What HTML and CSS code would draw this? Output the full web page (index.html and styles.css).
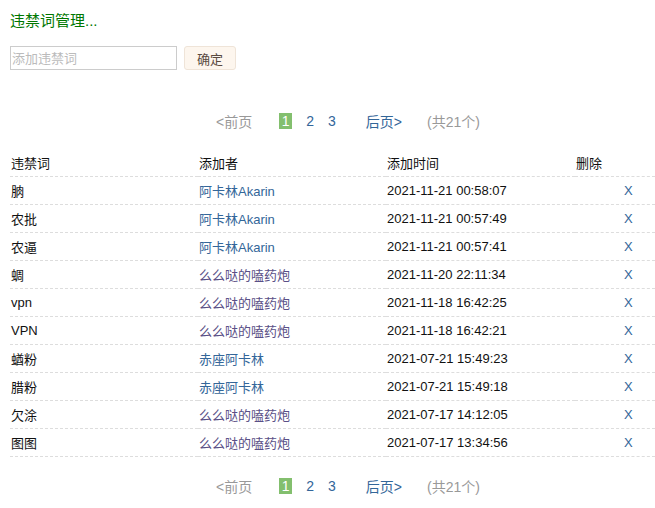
FILE: index.html
```html
<!DOCTYPE html>
<html lang="zh-CN">
<head>
  <meta charset="UTF-8">
  <title>违禁词管理</title>
  <link rel="stylesheet" href="styles.css">
</head>
<body>
  <h2 class="title">违禁词管理...</h2>
  <form class="add-form">
    <input type="text" class="word-input" placeholder="添加违禁词">
    <button type="button" class="btn">确定</button>
  </form>

  <div class="pager">
    <span class="prev">&lt;前页</span>
    <span class="pages"><span class="cur">1</span><a href="#">2</a><a href="#">3</a></span>
    <a href="#" class="next">后页&gt;</a>
    <span class="total">(共21个)</span>
  </div>

  <table class="words">
    <colgroup>
      <col class="c-word"><col class="c-user"><col class="c-time"><col>
    </colgroup>
    <thead>
      <tr><th>违禁词</th><th>添加者</th><th>添加时间</th><th>删除</th></tr>
    </thead>
    <tbody>
      <tr><td>朒</td><td><a href="#">阿卡林Akarin</a></td><td>2021-11-21 00:58:07</td><td class="del"><a href="#">X</a></td></tr>
      <tr><td>农批</td><td><a href="#">阿卡林Akarin</a></td><td>2021-11-21 00:57:49</td><td class="del"><a href="#">X</a></td></tr>
      <tr><td>农逼</td><td><a href="#">阿卡林Akarin</a></td><td>2021-11-21 00:57:41</td><td class="del"><a href="#">X</a></td></tr>
      <tr><td>蜩</td><td><a href="#" class="visited">么么哒的嗑药炮</a></td><td>2021-11-20 22:11:34</td><td class="del"><a href="#">X</a></td></tr>
      <tr><td>vpn</td><td><a href="#" class="visited">么么哒的嗑药炮</a></td><td>2021-11-18 16:42:25</td><td class="del"><a href="#">X</a></td></tr>
      <tr><td>VPN</td><td><a href="#" class="visited">么么哒的嗑药炮</a></td><td>2021-11-18 16:42:21</td><td class="del"><a href="#">X</a></td></tr>
      <tr><td>蝤粉</td><td><a href="#">赤座阿卡林</a></td><td>2021-07-21 15:49:23</td><td class="del"><a href="#">X</a></td></tr>
      <tr><td>腊粉</td><td><a href="#">赤座阿卡林</a></td><td>2021-07-21 15:49:18</td><td class="del"><a href="#">X</a></td></tr>
      <tr><td>欠涂</td><td><a href="#" class="visited">么么哒的嗑药炮</a></td><td>2021-07-17 14:12:05</td><td class="del"><a href="#">X</a></td></tr>
      <tr><td>图图</td><td><a href="#" class="visited">么么哒的嗑药炮</a></td><td>2021-07-17 13:34:56</td><td class="del"><a href="#">X</a></td></tr>
    </tbody>
  </table>

  <div class="pager bottom">
    <span class="prev">&lt;前页</span>
    <span class="pages"><span class="cur">1</span><a href="#">2</a><a href="#">3</a></span>
    <a href="#" class="next">后页&gt;</a>
    <span class="total">(共21个)</span>
  </div>
</body>
</html>
```

FILE: styles.css
```css
body {
  margin: 0;
  padding: 0 0 0 10px;
  font-family: "Liberation Sans", Arial, "Noto Sans CJK SC", sans-serif;
  font-size: 13px;
  color: #111;
  background: #fff;
}
a {
  color: #336699;
  text-decoration: none;
}
a.visited {
  color: #5a4f86;
}
.title {
  margin: 0;
  padding-top: 10px;
  height: 24px;
  font-size: 15px;
  font-weight: normal;
  line-height: 22px;
  color: #007700;
}
.add-form {
  display: flex;
  align-items: center;
  gap: 7px;
  margin: 12px 0 0;
  height: 24px;
}
.word-input {
  box-sizing: border-box;
  width: 167px;
  height: 24px;
  margin: 0;
  padding: 2px 1px;
  border: 1px solid #ccc;
  font: 13px "Liberation Sans", "Noto Sans CJK SC", sans-serif;
}
.word-input::placeholder {
  color: #bbb;
}
.btn {
  box-sizing: border-box;
  width: 52px;
  height: 24px;
  border: 1px solid #efe4d8;
  border-radius: 3px;
  background: #fdf6ee;
  color: #5a4a40;
  font: 13px "Liberation Sans", "Noto Sans CJK SC", sans-serif;
}
.pager {
  display: flex;
  align-items: center;
  height: 20px;
  margin-top: 41px;
  padding-left: 206px;
  font-size: 14px;
  color: #999;
}
.pager .pages {
  display: flex;
  align-items: center;
  gap: 14px;
  margin-left: 27px;
}
.pager .cur {
  display: inline-block;
  width: 13px;
  height: 16px;
  line-height: 16px;
  text-align: center;
  background: #83bf6e;
  color: #fff;
}
.pager .next {
  margin-left: 30px;
}
.pager .total {
  margin-left: 25px;
}
.pager.bottom {
  margin-top: 19px;
}
.words {
  width: 645px;
  margin-top: 21px;
  border-collapse: collapse;
  table-layout: fixed;
}
.words .c-word, .words .c-user {
  width: 188px;
}
.words .c-time {
  width: 189px;
}
.words th, .words td {
  height: 27px;
  padding: 0 0 0 1px;
  text-align: left;
  font-weight: normal;
  border-bottom: 1px dashed #ddd;
}
.words th {
  height: 23px;
  vertical-align: top;
  padding-top: 1px;
}
.words td.del {
  padding-left: 49px;
}
```
